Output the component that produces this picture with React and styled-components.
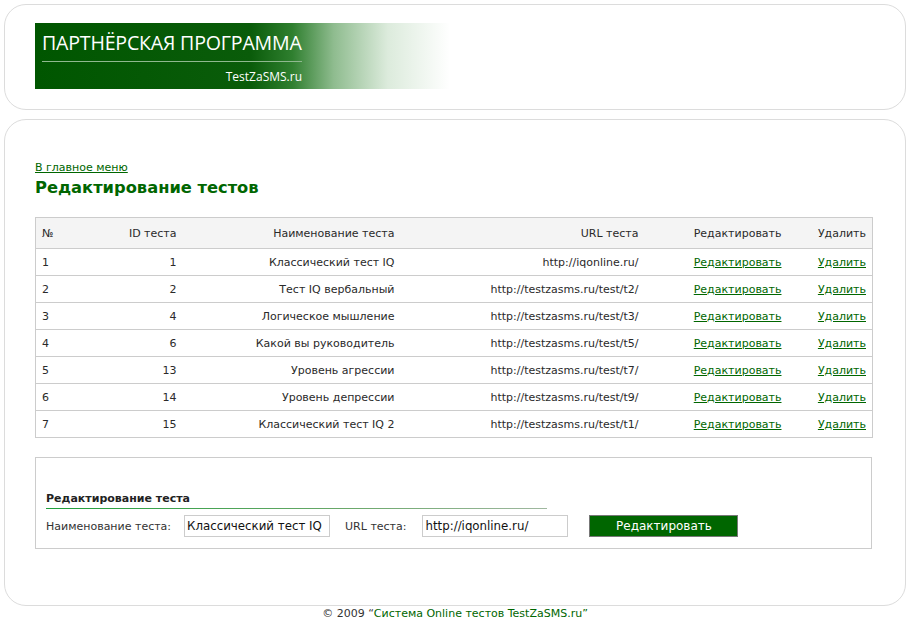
import React from "react";
import styled, { createGlobalStyle } from "styled-components";

const GlobalStyle = createGlobalStyle`
    body {
        margin: 4px;
        background: #fff;
        font-family: "DejaVu Sans", Verdana, sans-serif;
        font-size: 11px;
        color: #2a2a2a;
    }
`;

const tests = [
    { n: 1, id: 1, name: "Классический тест IQ", url: "http://iqonline.ru/" },
    { n: 2, id: 2, name: "Тест IQ вербальный", url: "http://testzasms.ru/test/t2/" },
    { n: 3, id: 4, name: "Логическое мышление", url: "http://testzasms.ru/test/t3/" },
    { n: 4, id: 6, name: "Какой вы руководитель", url: "http://testzasms.ru/test/t5/" },
    { n: 5, id: 13, name: "Уровень агрессии", url: "http://testzasms.ru/test/t7/" },
    { n: 6, id: 14, name: "Уровень депрессии", url: "http://testzasms.ru/test/t9/" },
    { n: 7, id: 15, name: "Классический тест IQ 2", url: "http://testzasms.ru/test/t1/" },
];

const Page = styled.div`
    width: 902px;
`;

const Box = styled.div`
    border: 1px solid #dcdcdc;
    border-radius: 22px;
    padding: ${(p) => p.$pad};
    margin-bottom: ${(p) => p.$gap || "0"};
`;

const Banner = styled.div`
    width: 415px;
    height: 66px;
    box-sizing: border-box;
    padding: 7px 0 0 7px;
    background: linear-gradient(
        to right,
        #005600 0%,
        #0a5c0a 52%,
        #2f7f2f 62%,
        #8fbc8f 72%,
        #dcebdc 85%,
        #ffffff 100%
    );
    color: #fff;
    font-family: "Open Sans", "Liberation Sans", sans-serif;
`;

const BannerTitle = styled.div`
    font-size: 19.6px;
    line-height: 25px;
    letter-spacing: -0.2px;
    width: 260px;
    padding-bottom: 6px;
    border-bottom: 1px solid #8fb88f;
`;

const BannerSub = styled.div`
    width: 260px;
    text-align: right;
    font-size: 12px;
    line-height: 18px;
    margin-top: 6px;
`;

const Link = styled.a`
    color: #006600;
    text-decoration: underline;
    cursor: pointer;
`;

const BackLink = styled(Link)`
    display: block;
    line-height: 14px;
`;

const Heading = styled.h1`
    margin: 2px 0 18px;
    font-size: 16.3px;
    line-height: 22px;
    font-weight: bold;
    color: #006600;
`;

const Table = styled.table`
    width: 837px;
    border-collapse: collapse;
    table-layout: fixed;
    border: 1px solid #cccccc;
`;

const Row = styled.tr`
    background: ${(p) => (p.$head ? "#f4f4f4" : "#fff")};
    height: ${(p) => (p.$head ? "31px" : "27px")};
    border-bottom: 1px solid #cccccc;
`;

const Cell = styled.td`
    padding: 0 6px;
    text-align: ${(p) => p.$align || "right"};
    white-space: nowrap;
    font-weight: normal;
`;

const FormBox = styled.div`
    margin-top: 19px;
    width: 837px;
    box-sizing: border-box;
    border: 1px solid #cccccc;
    padding: 34px 10px 11px;
`;

const FormTitle = styled.div`
    width: 501px;
    font-weight: bold;
    font-size: 11px;
    line-height: 14px;
    padding-bottom: 2px;
    margin-bottom: 4px;
    color: #222;
    &::after {
        content: "";
        display: block;
        height: 1px;
        margin-top: 2px;
        background: linear-gradient(to right, #1f9e3a, #6aa86a 60%, #a0b8a0);
    }
`;

const FormRow = styled.div`
    display: flex;
    align-items: center;
`;

const Label = styled.label`
    color: #333;
    margin-right: ${(p) => p.$gap};
`;

const Input = styled.input`
    box-sizing: border-box;
    height: 22px;
    width: 146px;
    border: 1px solid #cccccc;
    padding: 0 2px;
    font-family: "DejaVu Sans", Verdana, sans-serif;
    font-size: 11.8px;
    color: #111;
    margin-right: ${(p) => p.$gap};
`;

const Button = styled.button`
    box-sizing: border-box;
    width: 149px;
    height: 22px;
    background: #006600;
    border: 1px solid #777;
    color: #fff;
    font-family: "DejaVu Sans", Verdana, sans-serif;
    font-size: 12px;
    padding: 0;
    cursor: pointer;
`;

const Footer = styled.div`
    text-align: center;
    line-height: 16px;
    color: #333;
    span {
        color: #006600;
    }
`;

export default function App() {
    return (
        <Page>
            <GlobalStyle />
            <Box $pad="18px 30px 20px" $gap="9px">
                <Banner>
                    <BannerTitle>ПАРТНЁРСКАЯ ПРОГРАММА</BannerTitle>
                    <BannerSub>TestZaSMS.ru</BannerSub>
                </Banner>
            </Box>
            <Box $pad="41px 30px 56px">
                <BackLink>В главное меню</BackLink>
                <Heading>Редактирование тестов</Heading>
                <Table>
                    <colgroup>
                        <col style={{ width: 45 }} />
                        <col style={{ width: 102 }} />
                        <col style={{ width: 218 }} />
                        <col style={{ width: 244 }} />
                        <col style={{ width: 143 }} />
                        <col style={{ width: 85 }} />
                    </colgroup>
                    <thead>
                        <Row $head>
                            <Cell as="th" $align="left">№</Cell>
                            <Cell as="th">ID теста</Cell>
                            <Cell as="th">Наименование теста</Cell>
                            <Cell as="th">URL теста</Cell>
                            <Cell as="th">Редактировать</Cell>
                            <Cell as="th">Удалить</Cell>
                        </Row>
                    </thead>
                    <tbody>
                        {tests.map((t) => (
                            <Row key={t.n}>
                                <Cell $align="left">{t.n}</Cell>
                                <Cell>{t.id}</Cell>
                                <Cell>{t.name}</Cell>
                                <Cell>{t.url}</Cell>
                                <Cell>
                                    <Link>Редактировать</Link>
                                </Cell>
                                <Cell>
                                    <Link>Удалить</Link>
                                </Cell>
                            </Row>
                        ))}
                    </tbody>
                </Table>
                <FormBox>
                    <FormTitle>Редактирование теста</FormTitle>
                    <FormRow>
                        <Label $gap="13px">Наименование теста:</Label>
                        <Input $gap="15px" defaultValue="Классический тест IQ" />
                        <Label $gap="16px">URL теста:</Label>
                        <Input $gap="21px" defaultValue="http://iqonline.ru/" />
                        <Button>Редактировать</Button>
                    </FormRow>
                </FormBox>
            </Box>
            <Footer>
                © 2009 “<span>Система Online тестов TestZaSMS.ru”</span>
            </Footer>
        </Page>
    );
}
